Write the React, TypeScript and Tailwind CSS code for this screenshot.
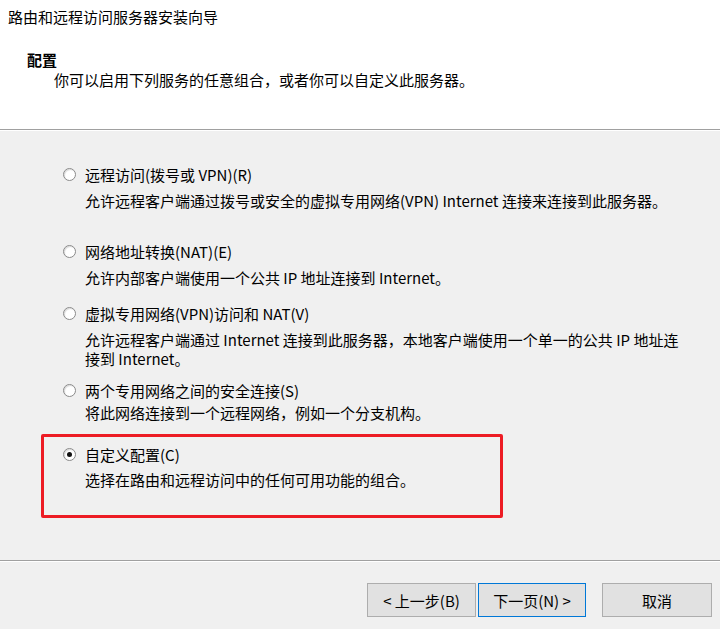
const options = [
  {
    title: "远程访问(拨号或 VPN)(R)",
    desc: ["允许远程客户端通过拨号或安全的虚拟专用网络(VPN) Internet 连接来连接到此服务器。"],
    mt: "mt-[34px]",
    dmt: "mt-[7px]",
  },
  {
    title: "网络地址转换(NAT)(E)",
    desc: ["允许内部客户端使用一个公共 IP 地址连接到 Internet。"],
    mt: "mt-[32px]",
    dmt: "mt-[7px]",
  },
  {
    title: "虚拟专用网络(VPN)访问和 NAT(V)",
    desc: ["允许远程客户端通过 Internet 连接到此服务器，本地客户端使用一个单一的公共 IP 地址连", "接到 Internet。"],
    mt: "mt-[17px]",
    dmt: "mt-[7px]",
  },
  {
    title: "两个专用网络之间的安全连接(S)",
    desc: ["将此网络连接到一个远程网络，例如一个分支机构。"],
    mt: "mt-[13px]",
    dmt: "mt-[3px]",
  },
  {
    title: "自定义配置(C)",
    desc: ["选择在路由和远程访问中的任何可用功能的组合。"],
    mt: "mt-[23px]",
    dmt: "mt-[6px]",
    checked: true,
  },
];

function Radio({ checked }: { checked?: boolean }) {
  return (
    <span className="w-[13px] h-[13px] rounded-full border border-[#8a8a8a] bg-white flex items-center justify-center shrink-0 shadow-[inset_1px_1px_1px_rgba(0,0,0,0.15)]">
      {checked && <span className="w-[5px] h-[5px] rounded-full bg-[#111]" />}
    </span>
  );
}

export default function App() {
  return (
    <div className="w-[720px] h-[629px] bg-[#f0f0f0] flex flex-col text-[15px] text-black font-['Noto_Sans_CJK_SC',sans-serif]">
      {/* Header */}
      <div className="h-[130px] bg-white border-b border-[#a0a0a0] shrink-0">
        <div className="pl-[8px] pt-[7px] leading-[20px]">路由和远程访问服务器安装向导</div>
        <div className="pl-[27px] mt-[23px] leading-[20px] font-bold">配置</div>
        <div className="pl-[54px] leading-[20px]">你可以启用下列服务的任意组合，或者你可以自定义此服务器。</div>
      </div>

      {/* Body */}
      <div className="relative flex-1 border-t border-white flex flex-col pl-[63px]">
        {options.map((o) => (
          <div key={o.title} className={o.mt}>
            <div className="flex items-center gap-[9px] leading-[19px]">
              <Radio checked={o.checked} />
              <span>{o.title}</span>
            </div>
            <div className={`${o.dmt} pl-[22px] leading-[19px]`}>
              {o.desc.map((d) => (
                <div key={d}>{d}</div>
              ))}
            </div>
          </div>
        ))}

        {/* highlight box */}
        <div className="absolute left-[41px] top-[303px] w-[462px] h-[84px] border-[3px] border-[#ed1c24] rounded-[2px]" />
      </div>

      {/* Footer */}
      <div className="h-[69px] shrink-0 border-t border-[#a0a0a0] shadow-[inset_0_1px_0_#fff] flex items-start pt-[22px] pl-[367px]">
        <button className="w-[109px] h-[34px] bg-[#e1e1e1] border border-[#adadad] leading-none">&lt; 上一步(B)</button>
        <button className="ml-[2px] w-[108px] h-[34px] bg-[#e1e1e1] border border-[#0078d7] leading-none">下一页(N) &gt;</button>
        <button className="ml-[16px] w-[110px] h-[34px] bg-[#e1e1e1] border border-[#adadad] leading-none">取消</button>
      </div>
    </div>
  );
}
